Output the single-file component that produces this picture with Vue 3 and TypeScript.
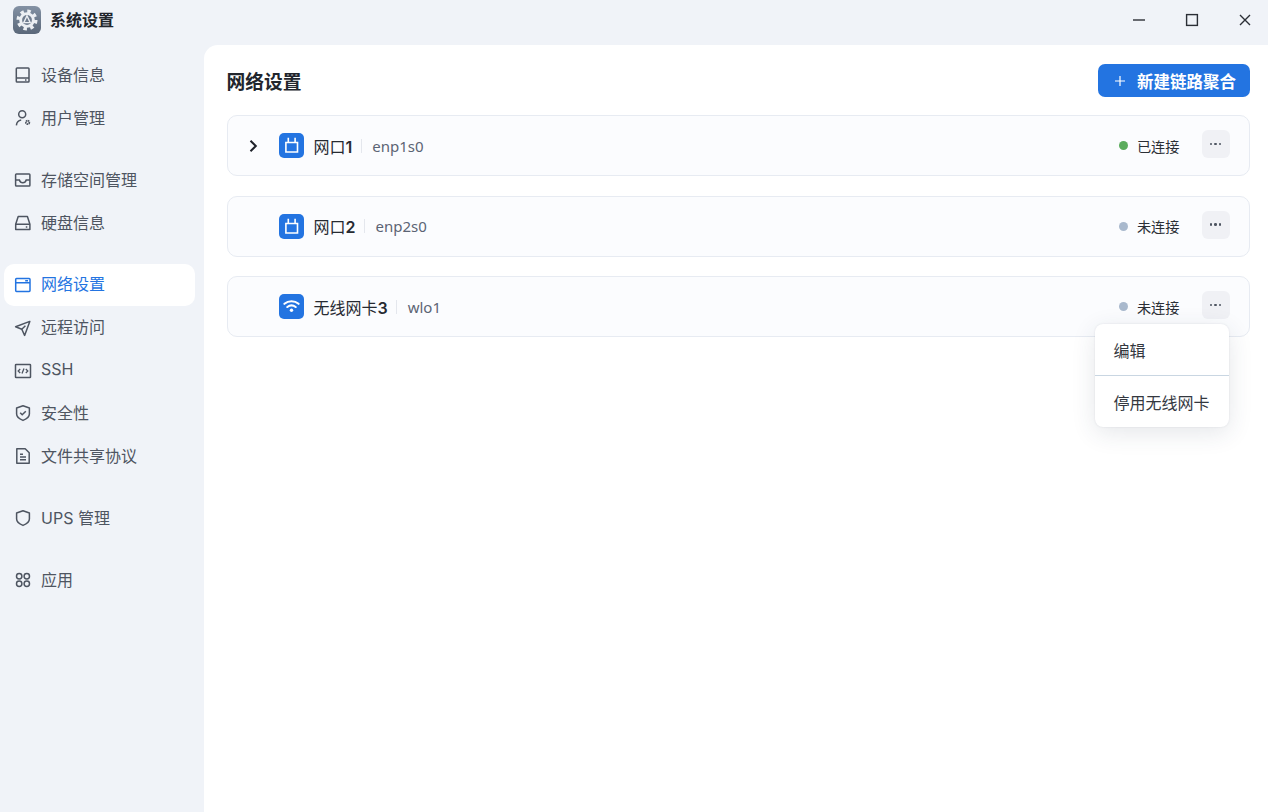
<script setup lang="ts">
interface NavItem { label: string; icon: string; active?: boolean }
const groups: NavItem[][] = [
  [{ label: '设备信息', icon: 'device' }, { label: '用户管理', icon: 'user' }],
  [{ label: '存储空间管理', icon: 'inbox' }, { label: '硬盘信息', icon: 'disk' }],
  [
    { label: '网络设置', icon: 'net', active: true },
    { label: '远程访问', icon: 'send' },
    { label: 'SSH', icon: 'code' },
    { label: '安全性', icon: 'shieldCheck' },
    { label: '文件共享协议', icon: 'file' },
  ],
  [{ label: 'UPS 管理', icon: 'shield' }],
  [{ label: '应用', icon: 'apps' }],
]
interface Port { name: string; num: string; dev: string; online: boolean; wifi: boolean; expand: boolean }
const ports: Port[] = [
  { name: '网口', num: '1', dev: 'enp1s0', online: true, wifi: false, expand: true },
  { name: '网口', num: '2', dev: 'enp2s0', online: false, wifi: false, expand: false },
  { name: '无线网卡', num: '3', dev: 'wlo1', online: false, wifi: true, expand: false },
]
</script>

<template>
  <div class="app">
    <header class="titlebar">
      <div class="brand">
        <div class="logo">
          <svg viewBox="0 0 28 28" width="28" height="28">
            <circle cx="14" cy="14" r="8.800" fill="none" stroke="#eceff3" stroke-width="3.400" stroke-dasharray="3.450 3.460" />
            <circle cx="14" cy="14" r="7.800" fill="#eceff3" />
            <circle cx="14" cy="14" r="4.900" fill="#6f7c8e" />
            <path d="M14 9.800 10.800 16.600h6.400z" fill="none" stroke="#eceff3" stroke-width="1.400" />
          </svg>
        </div>
        <span class="app-name">系统设置</span>
      </div>
      <div class="winctl">
        <svg viewBox="0 0 14 14" width="14" height="14"><path d="M1 7h12" stroke="#2b2f36" stroke-width="1.400" /></svg>
        <svg viewBox="0 0 14 14" width="14" height="14"><rect x="1.600" y="1.600" width="10.800" height="10.800" fill="none" stroke="#2b2f36" stroke-width="1.400" /></svg>
        <svg viewBox="0 0 14 14" width="14" height="14"><path d="M2 2l10 10M12 2 2 12" stroke="#2b2f36" stroke-width="1.400" /></svg>
      </div>
    </header>
    <div class="body">
      <aside class="sidebar">
        <div v-for="(g, gi) in groups" :key="gi" class="group">
          <div v-for="item in g" :key="item.label" class="nav" :class="{ active: item.active }">
            <svg class="nav-ico" viewBox="0 0 18 18" width="18" height="18" fill="none" stroke="currentColor" stroke-width="1.500">
              <template v-if="item.icon === 'device'">
                <rect x="2.300" y="2" width="12.700" height="14" rx=".8" />
                <path d="M2.300 12h12.700M11 14h1.500" />
              </template>
              <template v-else-if="item.icon === 'user'">
                <circle cx="8.200" cy="5.200" r="3.500" />
                <path d="M2.400 16.400c.2-2.800 2-5 4.800-5.400" />
                <circle cx="13.600" cy="13.400" r="1.700" stroke-width="1.800" stroke-dasharray="1.400 .45" />
              </template>
              <template v-else-if="item.icon === 'inbox'">
                <rect x="1.600" y="3" width="14.300" height="12" rx=".8" />
                <path d="M1.600 9h3.800c.6 2 1.800 2.700 3.400 2.700s2.800-.7 3.400-2.700h3.700" />
              </template>
              <template v-else-if="item.icon === 'disk'">
                <path d="M4.200 2.600h9.200l2.500 7.600v5.400H1.700v-5.400z" stroke-linejoin="round" />
                <path d="M1.700 10.200h14.200M11.800 13h1.500" />
              </template>
              <template v-else-if="item.icon === 'net'">
                <rect x="1.700" y="2.600" width="14.300" height="12.800" rx=".8" />
                <path d="M1.700 6.800h14.300M11.200 4.700h2.800" />
              </template>
              <template v-else-if="item.icon === 'send'">
                <path d="M15.800 2.400 1.600 7.800l6.200 2.400 2.800 6.200z" stroke-linejoin="round" />
                <path d="M7.800 10.200l3.600-3.400" />
              </template>
              <template v-else-if="item.icon === 'code'">
                <rect x="1.500" y="2.500" width="15" height="13" rx=".6" />
                <path d="M6.200 7 4.200 9l2 2M11.800 7l2 2-2 2M10 6.400 8 11.600" stroke-width="1.300" />
              </template>
              <template v-else-if="item.icon === 'shieldCheck'">
                <path d="M9 1.800 15.400 4v6c0 3-3 5-6.400 6.400C5.600 15 2.600 13 2.600 10V4z" stroke-linejoin="round" />
                <path d="m6.200 8.800 2 2 3.600-3.600" />
              </template>
              <template v-else-if="item.icon === 'file'">
                <path d="M2.800 1.800h8.400l4 4v10.400H2.800z" stroke-linejoin="round" />
                <path d="M6 7.200h3M6 10h6M6 12.800h6" />
              </template>
              <template v-else-if="item.icon === 'shield'">
                <path d="M9 1.800 15.400 4v6c0 3-3 5-6.400 6.400C5.600 15 2.600 13 2.600 10V4z" stroke-linejoin="round" />
              </template>
              <template v-else>
                <circle cx="5.200" cy="5.200" r="2.700" />
                <circle cx="12.800" cy="5.200" r="2.700" />
                <circle cx="5.200" cy="12.800" r="2.700" />
                <circle cx="12.800" cy="12.800" r="2.700" />
              </template>
            </svg>
            <span class="nav-label">{{ item.label }}</span>
          </div>
        </div>
      </aside>
      <main class="main">
        <div class="head">
          <h1>网络设置</h1>
          <button class="primary">
            <svg viewBox="0 0 10 10" width="10" height="10"><path d="M5 0v10M0 5h10" stroke="#fff" stroke-width="1.200" /></svg>
            <span>新建链路聚合</span>
          </button>
        </div>
        <div class="list">
          <div v-for="p in ports" :key="p.dev" class="card">
            <div class="chev">
              <svg v-if="p.expand" viewBox="0 0 12 14" width="12" height="14" fill="none"><path d="M3.500 1.800 8.800 7l-5.300 5.200" stroke="#1d2129" stroke-width="2" /></svg>
            </div>
            <div class="port-ico">
              <svg v-if="!p.wifi" viewBox="0 0 25 25" width="25" height="25" fill="none" stroke="#fff" stroke-width="1.600">
                <path d="M9.300 4.800v4.700H6.900V19h11.600V9.500H9.300M16.100 4.800v4.700" />
              </svg>
              <svg v-else viewBox="0 0 25 25" width="25" height="25" fill="none" stroke="#fff" stroke-width="2.100" stroke-linecap="round">
                <path d="M5.400 9.800c4.100-3.500 10.100-3.500 14.200 0M8.300 13c2.500-2 5.900-2 8.400 0" />
                <circle cx="12.500" cy="16.200" r="1.700" fill="#fff" stroke="none" />
              </svg>
            </div>
            <span class="port-name">{{ p.name }}<b>{{ p.num }}</b></span>
            <i class="sep"></i>
            <span class="dev">{{ p.dev }}</span>
            <div class="status">
              <i class="dot" :class="{ on: p.online }"></i>
              <span>{{ p.online ? '已连接' : '未连接' }}</span>
            </div>
            <div class="more">
              <i></i><i></i><i></i>
            </div>
          </div>
        </div>
        <div class="menu">
          <div class="menu-item">编辑</div>
          <div class="menu-item last">停用无线网卡</div>
        </div>
      </main>
    </div>
  </div>
</template>

<style>
html, body { margin: 0; padding: 0; background: #f0f3f8; }
</style>

<style scoped>
.app {
  width: 1268px;
  height: 812px;
  display: flex;
  flex-direction: column;
  overflow: hidden;
  background: #f0f3f8;
  font-family: Inter, "Noto Sans CJK SC", sans-serif;
  color: #1d2129;
}
.titlebar {
  height: 45px;
  flex: none;
  display: flex;
  align-items: center;
  justify-content: space-between;
  padding: 0 16px 5px 13px;
  box-sizing: border-box;
}
.brand { display: flex; align-items: center; gap: 9px; }
.logo {
  width: 28px;
  height: 28px;
  border-radius: 6px;
  background: linear-gradient(180deg, #8391a4, #5a6779);
}
.logo svg { display: block; }
.app-name { font-size: 16px; font-weight: 700; color: #22262d; line-height: 20px; }
.winctl { display: flex; align-items: center; gap: 39px; }
.winctl svg { display: block; }
.body { flex: 1; display: flex; min-height: 0; }
.sidebar {
  width: 204px;
  flex: none;
  padding: 9px 9px 0 4px;
  box-sizing: border-box;
  display: flex;
  flex-direction: column;
  gap: 19.200px;
}
.nav {
  height: 42.800px;
  padding-left: 10px;
  display: flex;
  align-items: center;
  gap: 9px;
  font-size: 16px;
  color: #4e5561;
  border-radius: 8px;
  box-sizing: border-box;
}
.nav-label { margin-top: -2.500px; }
.nav.active .nav-label { margin-top: -3.500px; }
.nav.active {
  background: #fff;
  color: #2374e1;
  height: 41.600px;
  margin: 0.400px 0 0.800px;
  border-radius: 10px;
}
.nav-ico { flex: none; display: block; }
.main {
  flex: 1;
  position: relative;
  background: #fff;
  border-top-left-radius: 14px;
  padding: 19px 18.500px 0 23px;
  box-sizing: border-box;
}
.head {
  height: 33px;
  display: flex;
  align-items: center;
  justify-content: space-between;
  margin-bottom: 18px;
}
h1 { margin: 0 0 0 -0.500px; font-size: 18.800px; font-weight: 700; color: #22262d; line-height: 26px; padding-top: 4px; }
.primary {
  width: 151.500px;
  height: 33px;
  border: none;
  border-radius: 7px;
  background: #2374e1;
  color: #fff;
  font: 700 16.500px Inter, "Noto Sans CJK SC", sans-serif;
  display: flex;
  align-items: center;
  gap: 12px;
  padding: 0 0 0 17px;
}
.primary svg { display: block; }
.list { display: flex; flex-direction: column; gap: 19.500px; }
.card {
  height: 61px;
  box-sizing: border-box;
  border: 1px solid #e7ebf2;
  border-radius: 10px;
  background: #fbfcfe;
  display: flex;
  align-items: center;
  padding: 0 19px;
}
.chev { width: 12px; height: 14px; margin-right: 20px; }
.chev svg { display: block; }
.port-ico {
  width: 25px;
  height: 25px;
  border-radius: 5px;
  background: #2374e1;
  flex: none;
}
.port-ico svg { display: block; }
.port-name { margin-left: 9.500px; font-size: 16px; font-weight: 400; color: #262a31; }
.port-name b { font-weight: 600; }
.sep { width: 1px; height: 14px; background: #e4e7ed; margin: 0 10.500px 0 8.500px; }
.dev { font-size: 15px; color: #5b6474; font-family: "Noto Sans", sans-serif; }
.status {
  margin-left: auto;
  display: flex;
  align-items: center;
  font-size: 14.200px;
  color: #2b2f36;
}
.dot { width: 9px; height: 9px; border-radius: 50%; background: #a9b9cd; margin-right: 9px; }
.dot.on { background: #5bac5d; }
.more {
  width: 28px;
  height: 28px;
  margin-left: 22px;
  margin-top: -3px;
  border-radius: 6px;
  background: #f0f1f5;
  display: flex;
  align-items: center;
  justify-content: center;
  gap: 2.400px;
}
.more i { width: 2.400px; height: 2.400px; border-radius: 50%; background: #4e5561; }
.menu {
  position: absolute;
  left: 891px;
  top: 279px;
  width: 134px;
  height: 103px;
  background: #fff;
  border-radius: 8px;
  box-shadow: 0 6px 24px rgba(40, 55, 80, 0.12), 0 0 2px rgba(40, 55, 80, 0.12);
}
.menu-item {
  height: 52px;
  display: flex;
  align-items: center;
  padding-left: 18.500px;
  font-size: 16px;
  color: #34383f;
  box-sizing: border-box;
  border-bottom: 1px solid #c9d6e2;
}
.menu-item.last { border-bottom: none; height: 51px; }
</style>
